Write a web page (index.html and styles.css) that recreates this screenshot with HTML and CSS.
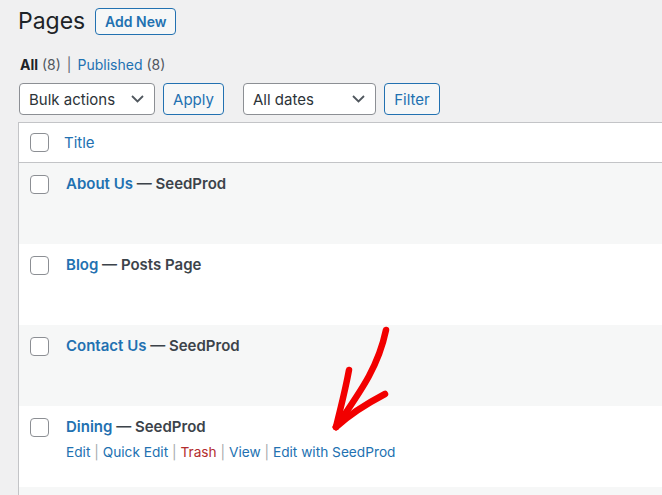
FILE: index.html
```html
<!DOCTYPE html>
<html lang="en">
<head>
    <meta charset="UTF-8">
    <title>Pages</title>
    <link rel="stylesheet" href="styles.css">
</head>
<body>

<div class="wrap">
    <!-- heading -->
    <div class="page-head">
        <h1>Pages</h1>
        <a class="btn add-new" href="#">Add New</a>
    </div>

    <!-- status filter -->
    <ul class="subsubsub">
        <li><b>All</b> <span class="count">(8)</span></li>
        <li class="sep">|</li>
        <li><a href="#">Published</a> <span class="count">(8)</span></li>
    </ul>

    <!-- bulk / filter bar -->
    <div class="tablenav">
        <div class="select bulk">
            <span>Bulk actions</span>
            <svg width="13" height="8" viewBox="0 0 13 8"><path d="M1 1l5.5 5.5L12 1" fill="none" stroke="#50575e" stroke-width="1.8"/></svg>
        </div>
        <a class="btn apply" href="#">Apply</a>
        <div class="select dates">
            <span>All dates</span>
            <svg width="13" height="8" viewBox="0 0 13 8"><path d="M1 1l5.5 5.5L12 1" fill="none" stroke="#50575e" stroke-width="1.8"/></svg>
        </div>
        <a class="btn filter" href="#">Filter</a>
    </div>

    <!-- list table -->
    <div class="list">
        <div class="row head">
            <span class="cb"></span>
            <a class="col-title" href="#">Title</a>
        </div>
        <div class="row alt">
            <span class="cb"></span>
            <div class="cell">
                <p class="name"><a href="#">About Us</a> — SeedProd</p>
            </div>
        </div>
        <div class="row">
            <span class="cb"></span>
            <div class="cell">
                <p class="name"><a href="#">Blog</a> — Posts Page</p>
            </div>
        </div>
        <div class="row alt">
            <span class="cb"></span>
            <div class="cell">
                <p class="name"><a href="#">Contact Us</a> — SeedProd</p>
            </div>
        </div>
        <div class="row">
            <span class="cb"></span>
            <div class="cell">
                <p class="name"><a href="#">Dining</a> — SeedProd</p>
                <p class="actions">
                    <a href="#">Edit</a> <i>|</i>
                    <a href="#">Quick Edit</a> <i>|</i>
                    <a class="trash" href="#">Trash</a> <i>|</i>
                    <a href="#">View</a> <i>|</i>
                    <a href="#">Edit with SeedProd</a>
                </p>
            </div>
        </div>
        <div class="row alt"></div>
    </div>
</div>

<!-- hand drawn arrow -->
<svg class="arrow" width="662" height="495" viewBox="0 0 662 495">
    <g fill="none" stroke="#f20000" stroke-width="6.5" stroke-linecap="round" stroke-linejoin="round">
        <path d="M386 330 C378 368 360 392 336 427"/>
        <path d="M349 370 C345 392 340 410 336 427"/>
        <path d="M385 394 C366 404 350 414 336 427"/>
    </g>
</svg>

</body>
</html>
```

FILE: styles.css
```css
body {
    margin: 0;
    background: #f0f0f1;
    font-family: Inter, "Noto Sans", sans-serif;
    color: #3c434a;
    overflow: hidden;
}

a {
    color: #2271b1;
    text-decoration: none;
}

.wrap {
    padding-left: 18px;
}

/* heading */
.page-head {
    display: flex;
    align-items: center;
    gap: 10px;
    height: 42px;
}

.page-head h1 {
    margin: 0;
    font-size: 23px;
    font-weight: 400;
    color: #1d2327;
}

.btn {
    display: inline-flex;
    align-items: center;
    justify-content: center;
    box-sizing: border-box;
    border: 1px solid #2271b1;
    border-radius: 4px;
    background: #f6f7f7;
    font-size: 14px;
    padding: 0;
    white-space: nowrap;
}

.add-new {
    height: 27px;
    width: 81px;
    font-weight: 600;
}

/* status links */
.subsubsub {
    list-style: none;
    display: flex;
    gap: 6px;
    margin: 14px 0 0 2px;
    padding: 0;
    font-size: 14px;
    color: #50575e;
}

.subsubsub b {
    color: #1d2327;
}

.subsubsub .sep {
    color: #646970;
}

/* filter bar */
.tablenav {
    display: flex;
    align-items: center;
    margin-top: 10px;
    height: 32px;
}

.select {
    display: flex;
    align-items: center;
    justify-content: space-between;
    box-sizing: border-box;
    height: 32px;
    padding: 0 10px 0 9px;
    border: 1px solid #8c8f94;
    border-radius: 4px;
    background: #fff;
    font-size: 15px;
    color: #2c3338;
}

.bulk {
    width: 136px;
    margin-left: 1px;
}

.dates {
    width: 133px;
    margin-left: 19px;
}

.tablenav .btn {
    height: 32px;
    font-size: 15px;
    margin-left: 8px;
}

.tablenav .apply {
    width: 61px;
}

.tablenav .filter {
    width: 56px;
}

/* table */
.list {
    margin-top: 7px;
    margin-right: -40px;
    background: #fff;
    border: 1px solid #c3c4c7;
    border-bottom: 0;
}

.row {
    display: flex;
    align-items: flex-start;
    height: 81px;
    padding: 12px 0 0 11px;
    box-sizing: border-box;
}

.row.alt {
    background: #f6f7f7;
}

.row.head {
    height: 40px;
    align-items: center;
    padding-top: 0;
    border-bottom: 1px solid #c3c4c7;
}

.cb {
    flex: none;
    width: 17px;
    height: 17px;
    border: 1px solid #8c8f94;
    border-radius: 4px;
    background: #fff;
}

.col-title {
    margin-left: 15px;
    font-size: 15px;
}

.cell {
    margin-left: 17px;
}

.cell p {
    margin: 0;
}

.name {
    font-size: 15px;
    font-weight: 600;
    line-height: 18px;
    color: #3c434a;
}

.actions {
    margin-top: 7px !important;
    font-size: 13.7px;
    line-height: 18px;
}

.actions i {
    font-style: normal;
    color: #a7aaad;
}

.actions .trash {
    color: #b32d2e;
}

/* red annotation */
.arrow {
    position: absolute;
    top: 0;
    left: 0;
    pointer-events: none;
}
```
